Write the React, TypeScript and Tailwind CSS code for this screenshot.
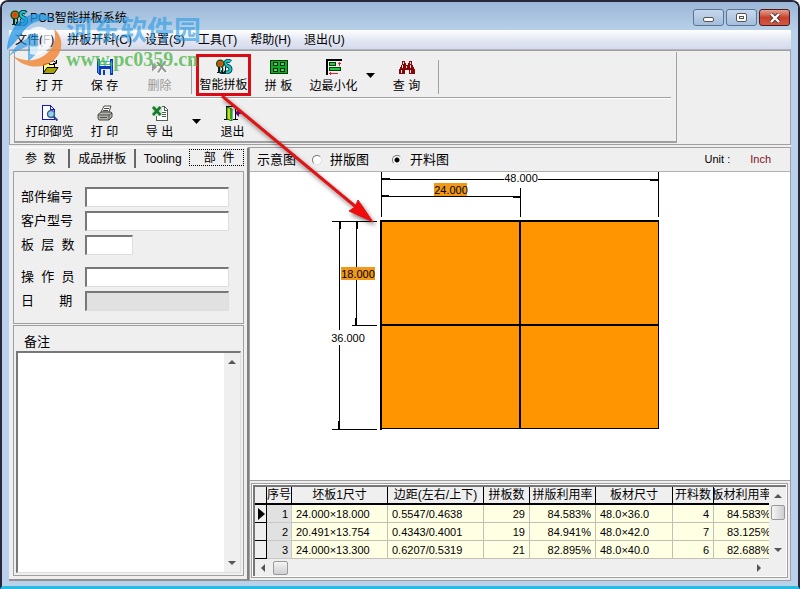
import React from "react";

const rows = [
  ["1", "24.000×18.000", "0.5547/0.4638", "29", "84.583%", "48.0×36.0", "4", "84.583%"],
  ["2", "20.491×13.754", "0.4343/0.4001", "19", "84.941%", "48.0×42.0", "7", "83.125%"],
  ["3", "24.000×13.300", "0.6207/0.5319", "21", "82.895%", "48.0×40.0", "6", "82.688%"],
];

const menus = ["文件(F)", "拼板开料(C)", "设置(S)", "工具(T)", "帮助(H)", "退出(U)"];

function Icon({ children, w = 18 }: { children: React.ReactNode; w?: number }) {
  return (
    <svg width={w} height="16" viewBox={`0 0 ${w} 16`} shapeRendering="crispEdges" aria-hidden="true">
      {children}
    </svg>
  );
}

function OpenIcon() {
  return (
    <Icon>
      <path d="M2 14V5h2V4h4v1h5v3" fill="#ffff80" stroke="#000" />
      <path d="M2 14.500 6 8.500h11l-4 6z" fill="#a8a000" stroke="#000" shapeRendering="auto" />
      <path d="M9.500 2.500q3-2 5.500 1M15.500 1v3.500H12" fill="none" stroke="#000" shapeRendering="auto" />
    </Icon>
  );
}

function SaveIcon() {
  return (
    <Icon>
      <path d="M1 0h16v16H3l-2-2z" fill="#1238b8" />
      <path d="M4 0h10v7H4z" fill="#fff" />
      <path d="M4 2h10v1H4zM4 5h10v1H4z" fill="#35b8e8" />
      <path d="M2 1h1v13H2zM15 2h1v12h-1z" fill="#2aa0f0" />
      <path d="M5 10h9v6H5z" fill="#dfeaf5" />
      <path d="M7 11h2v5H7z" fill="#1238b8" />
    </Icon>
  );
}

function DeleteIcon() {
  return (
    <Icon>
      <path d="M1 3.500v9l5-4.500z" fill="#999" shapeRendering="auto" />
      <path d="M6 3l10 11M15.500 2.500 7 14" stroke="#fff" strokeWidth="4" shapeRendering="auto" />
      <path d="M6 3l9 10M14.500 2 7 13.500" stroke="#999" strokeWidth="2.200" shapeRendering="auto" />
    </Icon>
  );
}

function SmartIcon() {
  return (
    <Icon>
      <path d="M16 3Q14 1 11.500 2.500T12 7q4 1 4 4t-5 3.500q-3 0-6-1" fill="none" stroke="#002c30" strokeWidth="4" shapeRendering="auto" />
      <path d="M16 3Q14 1 11.500 2.500T12 7q4 1 4 4t-5 3.500" fill="none" stroke="#16c4c8" strokeWidth="2.400" shapeRendering="auto" />
      <circle cx="5" cy="5" r="4.600" fill="#1c4a10" shapeRendering="auto" />
      <circle cx="5" cy="5" r="3.200" fill="#b07010" shapeRendering="auto" />
      <circle cx="5" cy="5" r="1.800" fill="#ee3418" shapeRendering="auto" />
      <path d="M3 9h2v6H2v-1h1zM7 9h1v6H7zM10 9h1v6h-1z" fill="#092418" />
      <path d="M5 9h1v5H5zM8 10h1v4H8z" fill="#9bb" />
    </Icon>
  );
}

function PanelIcon() {
  return (
    <Icon>
      <path d="M.5 1.500h17v13H.5z" fill="#18a428" stroke="#003b08" />
      <path d="M3.500 3.500h4v3h-4zM10.500 3.500h4v3h-4zM3.500 9.500h4v3h-4zM10.500 9.500h4v3h-4z" fill="#3ae04a" stroke="#002c04" />
    </Icon>
  );
}

function EdgeIcon() {
  return (
    <Icon>
      <path d="M1 0h16v2H3v14H1z" fill="#000" />
      <path d="M4.500 3.500h6v3h-6zM4.500 8.500h11v3h-11z" fill="#26c840" stroke="#003b08" />
      <path d="M14 3h1v4h-1zM13 4h3v1h-3zM4 14h9v1H4zM5 13h1v3H5z" fill="#e02030" />
    </Icon>
  );
}

function FindIcon() {
  return (
    <Icon>
      <path d="M4 2h3v2h1v2h2V4h1V2h3v3l3 6v4h-6v-4H7v4H1v-4l3-6z" fill="#850808" />
      <path d="M5 3h1v2H5zM4 6h1v3H4zM12 3h1v2h-1zM12 6h1v3h-1zM3 11h1v3H3zM12 11h1v3h-1zM8 7h1v2H8z" fill="#f8dede" />
    </Icon>
  );
}

function PreviewIcon() {
  return (
    <Icon>
      <path d="M1.500.5h8l4 4v10h-12z" fill="#fff" stroke="#1515c8" />
      <path d="M9.500.5v4h4" fill="none" stroke="#1515c8" />
      <circle cx="10" cy="9" r="3.500" fill="#8bd0f5" stroke="#46608a" strokeWidth="1.500" shapeRendering="auto" />
      <path d="m12.500 11.500 4 4" stroke="#27458a" strokeWidth="2" shapeRendering="auto" />
    </Icon>
  );
}

function PrintIcon() {
  return (
    <Icon>
      <g shapeRendering="auto" stroke="#4a4a48">
        <path d="m5 7 3-6h7l-2 6z" fill="#fff" />
        <path d="M8 3.500h5M7 5.500h5" />
        <path d="M2 9.500 5 7h10l1 1v4l-3 3H3l-1-2z" fill="#b5b5ad" />
        <path d="M2 10h11l3-2M4 12.500h7M13 10v5" fill="none" />
      </g>
    </Icon>
  );
}

function ExcelIcon() {
  return (
    <Icon>
      <path d="M5.500 1.500h8l3 3v11h-11z" fill="#fff" stroke="#506050" />
      <path d="M13 1v4h4M11 7h4M11 9h4M11 11h4" fill="none" stroke="#506050" />
      <path d="M1 1h10v10H1z" fill="#cfe5cf" />
      <path d="m2 2 7.500 8M9.500 2 2 10" stroke="#167a2c" strokeWidth="2.600" shapeRendering="auto" />
    </Icon>
  );
}

function ExitIcon() {
  return (
    <Icon>
      <path d="M2.500 14V1.500h9V14M0 14.500h4M9 14.500h5" fill="#fff" stroke="#000" />
      <path d="m3 2 5 2v12l-5-2z" fill="#d4dc18" stroke="#067016" shapeRendering="auto" />
      <path d="M6 4l2 1v10l-2-1z" fill="#22a030" />
      <path d="M12 7h6v2h-6zM11 8l4-4v8z" fill="#6a1488" shapeRendering="auto" />
    </Icon>
  );
}

function Tool({ icon, label, off, wide }: { icon: React.ReactNode; label: string; off?: boolean; wide?: boolean }) {
  return (
    <button
      type="button"
      disabled={off}
      className={`flex h-[42px] w-[55px] shrink-0 flex-col items-center gap-[3px] text-[12px] leading-[16px] whitespace-nowrap ${off ? "text-[#999]" : "text-black"} ${wide ? "border-[3px] border-[#dc0a14] pt-[2px]" : "pt-[5px]"}`}
    >
      {icon}
      <span>{label}</span>
    </button>
  );
}

function Drop({ label }: { label: string }) {
  return (
    <button type="button" aria-label={label} className="flex h-[42px] w-[18px] shrink-0 items-center justify-center">
      <svg width="9" height="5" viewBox="0 0 9 5" aria-hidden="true"><path d="M0 0h9L4.500 5z" /></svg>
    </button>
  );
}

function Field({ id, label, small, off }: { id: string; label: string; small?: boolean; off?: boolean }) {
  return (
    <div className="flex h-[20px] items-center">
      <label htmlFor={id} className="w-[64px] shrink-0 text-[13px] leading-[20px] whitespace-pre">{label}</label>
      <input
        id={id}
        disabled={off}
        className={`h-[20px] min-w-0 border-t-2 border-l-2 border-r border-b border-t-[#777] border-l-[#777] border-r-[#ddd] border-b-[#ddd] px-1 text-[12px] outline-none ${small ? "w-[48px]" : "flex-1"} ${off ? "bg-[#e1e1e1]" : "bg-white"}`}
      />
    </div>
  );
}

function Diagram() {
  return (
    <svg width="540" height="307" viewBox="250 172 540 307" shapeRendering="crispEdges" className="block" role="img" aria-label="开料图">
      <path d="M381 221h278v208H381z" fill="#ff9500" />
      <path d="M381 220v210M380 221h279M520 221v208M381 325h278" stroke="#000" strokeWidth="2" fill="none" />
      <path d="M658.500 221v208M381 428.500h278" stroke="#000" />
      <path
        d="M381.500 172v45M658.500 172v45M520.500 188v29M381 179.500h123M538 179.500h121M381 196.500h140M332 221.500h45M332 429.500h45M352 325.500h25M339.500 221v109M339.500 345v85M356.500 221v46M356.500 280v45"
        stroke="#000"
        fill="none"
      />
      <path d="M382 178.500h8M650 180.500h8M382 195.500h7M513 197.500h7M340.500 222v7M338.500 421v8M357.500 222v7M355.500 318v7" stroke="#000" />
      <path d="M434 183h33v13h-33zM341 267h34v13h-34z" fill="#f09818" />
      <g fontSize="11" textAnchor="middle" fill="#000" className="font-['Liberation_Sans',sans-serif]">
        <text x="521" y="182">48.000</text>
        <text x="451" y="194">24.000</text>
        <text x="358" y="278">18.000</text>
        <text x="348" y="342">36.000</text>
      </g>
    </svg>
  );
}

function Triangle({ d }: { d: string }) {
  return <svg width="8" height="8" viewBox="0 0 8 8" aria-hidden="true"><path d={d} fill="#555" /></svg>;
}
const up = "M0 6h8L4 2z";
const down = "M0 2h8L4 6z";
const left = "M6 0v8L2 4z";
const right = "M2 0v8l4-4z";

const head = "h-[18px] overflow-hidden border-r border-b-2 border-black bg-[#efefef] p-0 text-[12px] font-normal whitespace-nowrap";
const cell = "h-[18px] overflow-hidden border-r border-b border-[#c0c0b4] bg-[#ffffe4] px-[4px] py-0 whitespace-nowrap";

function Grid() {
  return (
    <div className="my-[2px] mr-[2px] ml-px flex flex-1 flex-col border border-[#a0a0a0] bg-white p-px">
      <div className="flex flex-1 flex-col border-t-2 border-l-2 border-[#777] bg-[#efefef]">
        <div className="flex">
          <div className="min-w-0 flex-1 overflow-hidden">
            <table className="w-full table-fixed border-separate border-spacing-0 text-[11px] leading-[16px]">
              <colgroup>
                <col className="w-[12px]" />
                <col className="w-[25px]" />
                <col className="w-[96px]" />
                <col className="w-[96px]" />
                <col className="w-[46px]" />
                <col className="w-[66px]" />
                <col className="w-[77px]" />
                <col className="w-[41px]" />
                <col />
              </colgroup>
              <thead>
                <tr>
                  <th className={head}></th>
                  {["序号", "坯板1尺寸", "边距(左右/上下)", "拼板数", "拼版利用率", "板材尺寸", "开料数"].map((h) => (
                    <th key={h} className={head}>{h}</th>
                  ))}
                  <th className={`${head} border-r-0`}><span className="flex justify-center">板材利用率</span></th>
                </tr>
              </thead>
              <tbody>
                {rows.map((r, i) => (
                  <tr key={r[0]}>
                    <td className="h-[18px] border-r border-b border-black bg-[#efefef] p-0">
                      {i === 0 && <svg width="7" height="12" viewBox="0 0 7 12" className="ml-[3px]" aria-label="当前行"><path d="M0 0v12l7-6z" /></svg>}
                    </td>
                    <td className="h-[18px] border-r border-b border-[#c8c8c8] bg-[#e1e1e1] px-[3px] py-0 text-right">{r[0]}</td>
                    <td className={cell}>{r[1]}</td>
                    <td className={cell}>{r[2]}</td>
                    <td className={`${cell} text-right`}>{r[3]}</td>
                    <td className={`${cell} text-right`}>{r[4]}</td>
                    <td className={cell}>{r[5]}</td>
                    <td className={`${cell} text-right`}>{r[6]}</td>
                    <td className="h-[18px] overflow-hidden border-b border-[#c0c0b4] bg-[#ffffe4] py-0 pr-0 pl-[13px] whitespace-nowrap">{r[7]}</td>
                  </tr>
                ))}
              </tbody>
            </table>
          </div>
          <div className="flex w-[17px] flex-col items-center py-[5px]">
            <Triangle d={up} />
            <div className="mt-[5px] h-[15px] w-[14px] rounded-xs border border-[#999] bg-linear-to-r from-[#f4f4f4] to-[#cfcfd2]" />
            <div className="flex-1" />
            <Triangle d={down} />
          </div>
        </div>
        <div className="flex h-[17px] items-center pr-[23px] pl-[4px]">
          <Triangle d={left} />
          <div className="ml-[6px] h-[14px] w-[15px] rounded-xs border border-[#999] bg-linear-to-b from-[#f4f4f4] to-[#cfcfd2]" />
          <div className="flex-1" />
          <Triangle d={right} />
        </div>
      </div>
    </div>
  );
}

function Tabs() {
  const tab = "h-[19px] whitespace-pre text-[12px] leading-[18px]";
  return (
    <div role="tablist" className="flex items-start pl-[3px]">
      <button type="button" role="tab" className={`${tab} w-[59px] border-r-2 border-[#666]`}>参  数</button>
      <button type="button" role="tab" className={`${tab} w-[66px] border-r-2 border-[#666]`}>成品拼板</button>
      <button type="button" role="tab" className={`${tab} w-[54px]`}>Tooling</button>
      <button type="button" role="tab" aria-selected="true" className="h-[17px] w-[55px] border border-dotted border-black pl-[5px] text-[12px] leading-[14px] whitespace-pre">部  件</button>
    </div>
  );
}

function Watermark() {
  return (
    <div className="pointer-events-none absolute top-[8px] left-[4px] flex items-start">
      <svg width="60" height="60" viewBox="0 0 60 60" aria-hidden="true">
        <path d="M1 40C2 20 14 5 30 4 38 3 44 6 48 11 36 8 24 12 17 22 12 29 6 36 1 40z" fill="#2196e3" opacity=".75" />
        <path d="M3 46Q10 34 22 28V24H32V42L22 52V36Q12 40 3 46z" fill="#2196e3" opacity=".6" />
        <path d="M48 19C58 27 58 42 47 51 36 60 17 58 7 46 18 52 30 52 39 45 48 38 51 28 48 19z" fill="#f08a3c" opacity=".85" />
        <path d="M22 21C32 12 47 18 46 30 45 41 33 47 24 44V36C31 38 37 35 37 29 37 23 30 21 22 25z" fill="#fff" opacity=".75" />
      </svg>
      <div className="flex flex-col">
        <span className="text-[27px] leading-[42px] font-bold whitespace-nowrap text-[#2d9be4]/65">河东软件园</span>
        <span className="-mt-1 font-['Liberation_Serif',serif] text-[20px] leading-[22px] font-bold text-[#48b548]/75">www.pc0359.cn</span>
      </div>
    </div>
  );
}

function PointerArrow() {
  return (
    <svg className="pointer-events-none absolute top-0 left-0" width="400" height="240" viewBox="2 1 400 240" aria-hidden="true">
      <defs>
        <filter id="shade" x="-20%" y="-20%" width="140%" height="140%">
          <feDropShadow dx="2" dy="3" stdDeviation="2" floodColor="#000" floodOpacity=".5" />
        </filter>
      </defs>
      <g filter="url(#shade)">
        <path d="M222 95 356 206" stroke="#dc1414" strokeWidth="3" />
        <path d="m373 221-24-11 6-4 3-7z" fill="#f01010" stroke="#dc1414" />
      </g>
    </svg>
  );
}

export default function App() {
  const control = "flex h-[17px] w-[31px] items-center justify-center rounded-[3px] border";
  return (
    <div className="relative flex min-h-screen flex-col overflow-hidden rounded-t-lg border-2 border-b-[3px] border-[#26283a] border-b-[#2bbbe0] bg-[#b9d1ea] px-[7px] pb-[5px] font-['Liberation_Sans','Noto_Sans_CJK_SC',sans-serif] text-[12px] text-black">
      <header className="-mx-[7px] flex h-[28px] items-center bg-linear-to-b from-[#9bb6d6] to-[#b7d0e9] pt-[3px] pr-[8px] pl-[8px]">
        <SmartIcon />
        <h1 className="ml-[2px] flex-1 text-[12px]">PCB智能拼板系统</h1>
        <div className="flex gap-[2px]">
          <button type="button" aria-label="最小化" className={`${control} border-[#5c7596] bg-linear-to-b from-[#c5d7ec] to-[#a5bddb]`}>
            <span className="mt-1 h-[5px] w-[11px] rounded-xs border border-[#555] bg-white" />
          </button>
          <button type="button" aria-label="最大化" className={`${control} border-[#5c7596] bg-linear-to-b from-[#c5d7ec] to-[#a5bddb]`}>
            <span className="flex h-[9px] w-[11px] items-center justify-center rounded-xs border border-[#555] bg-white">
              <span className="h-[3px] w-[5px] border border-[#555]" />
            </span>
          </button>
          <button type="button" aria-label="关闭" className={`${control} border-[#541a1a] bg-linear-to-b from-[#e2a090] via-[#c8402c] to-[#cf5a44]`}>
            <svg width="12" height="10" viewBox="0 0 12 10" aria-hidden="true">
              <path d="m2 1 8 8M10 1 2 9" stroke="#4a3030" strokeWidth="4" />
              <path d="m2 1 8 8M10 1 2 9" stroke="#fff" strokeWidth="2.400" />
            </svg>
          </button>
        </div>
      </header>
      <nav className="flex h-[20px] gap-[13px] border-b border-[#b0b4c0] bg-linear-to-b from-white via-[#e4e8f4] to-[#d5daec] pl-[6px]">
        {menus.map((m) => (
          <button key={m} type="button" className="h-[19px] leading-[20px] whitespace-nowrap">{m}</button>
        ))}
      </nav>

      <div className="flex flex-1 flex-col bg-[#efefef]">
        <section className="mb-[2px] flex border border-[#a0a0a0] py-px pr-[113px] pl-[4px]">
          <div className="flex-1 border-r border-b-2 border-l border-[#a0a0a0]">
            <div className="mr-[5px] ml-[7px] flex h-[46px] items-start border-b border-[#a0a0a0] pt-[2px] shadow-[0_1px_0_#fff]">
              <Tool icon={<OpenIcon />} label="打 开" />
              <Tool icon={<SaveIcon />} label="保 存" />
              <Tool icon={<DeleteIcon />} label="删除" off />
              <div className="mx-[4px] mt-[6px] h-[34px] w-px shrink-0 bg-[#a0a0a0]" />
              <Tool icon={<SmartIcon />} label="智能拼板" wide />
              <Tool icon={<PanelIcon />} label="拼 板" />
              <Tool icon={<EdgeIcon />} label="边最小化" />
              <Drop label="边最小化选项" />
              <Tool icon={<FindIcon />} label="查 询" />
              <div className="mx-[4px] mt-[6px] h-[34px] w-px shrink-0 bg-[#a0a0a0]" />
            </div>
            <div className="ml-[7px] flex h-[43px] items-start pt-[2px]">
              <Tool icon={<PreviewIcon />} label="打印御览" />
              <Tool icon={<PrintIcon />} label="打 印" />
              <Tool icon={<ExcelIcon />} label="导 出" />
              <Drop label="导出选项" />
              <Tool icon={<ExitIcon />} label="退出" />
            </div>
          </div>
        </section>

        <main className="flex flex-1">
          <aside className="flex w-[240px] shrink-0 flex-col border-t border-r-2 border-b-2 border-t-white border-r-[#808080] border-b-[#909090] pt-px pr-[3px] pb-[3px] pl-0">
            <Tabs />
            <section className="mt-[3px] ml-[4px] flex flex-col gap-[4px] border border-[#a0a0a0] pt-[15px] pr-[14px] pb-[12px] pl-[7px]">
              <Field id="part" label="部件编号" />
              <Field id="client" label="客户型号" />
              <Field id="layers" label="板  层  数" small />
              <div className="h-[4px]" />
              <Field id="operator" label="操  作  员" />
              <Field id="date" label="日       期" off />
            </section>
            <section className="mt-px ml-[4px] flex flex-1 flex-col border border-[#a0a0a0] p-[2px]">
              <label htmlFor="notes" className="h-[23px] pl-[8px] text-[13px] leading-[27px]">备注</label>
              <div className="flex flex-1 border-t-2 border-l-2 border-r border-b border-t-[#777] border-l-[#777] border-r-[#ddd] border-b-[#ddd] bg-white">
                <textarea id="notes" className="min-w-0 flex-1 resize-none outline-none" />
                <div className="flex w-[16px] flex-col items-center justify-between bg-[#efefef] py-[5px]">
                  <Triangle d={up} />
                  <Triangle d={down} />
                </div>
              </div>
            </section>
          </aside>

          <section className="flex min-w-0 flex-1 flex-col border border-[#a0a0a0]">
            <div className="flex h-[24px] shrink-0 items-center border-b border-[#b0b0b0] pl-[7px] text-[13px]">
              <span className="w-[55px]">示意图</span>
              <label className="flex w-[80px] items-center gap-[8px]">
                <input type="radio" name="view" className="h-[10px] w-[10px] appearance-none rounded-full border border-t-[#777] border-r-[#ddd] border-b-[#ddd] border-l-[#777] bg-white" />
                拼版图
              </label>
              <label className="flex items-center gap-[8px]">
                <input type="radio" name="view" defaultChecked className="h-[10px] w-[10px] appearance-none rounded-full border border-t-[#777] border-r-[#ddd] border-b-[#ddd] border-l-[#777] bg-[radial-gradient(circle,#000_0_2px,#fff_3px)]" />
                开料图
              </label>
              <span className="flex-1" />
              <span className="mr-[20px] text-[11px]">Unit :</span>
              <span className="mr-[19px] text-[11px] text-[#80101c]">Inch</span>
            </div>
            <div className="flex-1 overflow-hidden border-b border-[#a0a0a0] bg-white"><Diagram /></div>
            <div className="flex h-[99px] shrink-0"><Grid /></div>
          </section>
        </main>
      </div>
      <Watermark />
      <PointerArrow />
    </div>
  );
}
